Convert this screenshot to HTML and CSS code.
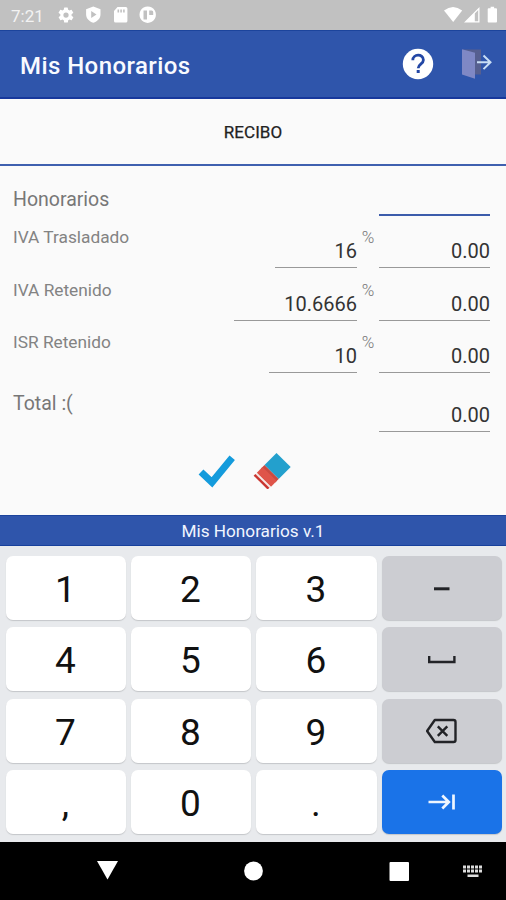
FILE: index.html
```html
<!DOCTYPE html>
<html lang="es">
<head>
<meta charset="utf-8">
<title>Mis Honorarios</title>
<link rel="stylesheet" href="styles.css">
</head>
<body>
<div class="status">
  <span class="clock">7:21</span>
  <svg class="status-left" width="104" height="20" viewBox="0 0 104 20" fill="#fff">
    <g transform="translate(1 1) scale(.75)"><path d="M19.4 13a7.500 7.500 0 0 0 0-2l2.100-1.600a.5.5 0 0 0 .1-.7l-2-3.400a.5.5 0 0 0-.6-.2l-2.500 1a7 7 0 0 0-1.700-1l-.4-2.600a.5.500 0 0 0-.5-.5h-4a.5.500 0 0 0-.5.5L9 5.100a7 7 0 0 0-1.700 1l-2.500-1a.5.5 0 0 0-.6.2l-2 3.400a.5.5 0 0 0 .1.700L4.500 11a8 8 0 0 0 0 2l-2.100 1.600a.5.5 0 0 0-.1.700l2 3.400c.1.200.4.300.6.200l2.500-1a7 7 0 0 0 1.700 1l.4 2.600c0 .3.200.5.5.5h4c.3 0 .5-.2.5-.5l.4-2.600a7 7 0 0 0 1.700-1l2.500 1c.2.100.5 0 .6-.2l2-3.400a.5.5 0 0 0-.1-.7zM12 15.500a3.500 3.500 0 1 1 0-7 3.500 3.500 0 0 1 0 7z"/></g>
    <path fill-rule="evenodd" d="M37.300 1.500l7.200 2.700v5c0 4.200-3 7.200-7.200 8.600-4.200-1.400-7.200-4.400-7.200-8.600v-5zM35.200 6v7l5.300-3.500z"/>
    <path fill-rule="evenodd" d="M61.500 2h8.300q1.600 0 1.600 1.600v12.300q0 1.600-1.600 1.600h-10.200q-1.600 0-1.600-1.600V6.100zM61.500 4.500v3h1.600v-3zM64.300 4.500v3h1.600v-3zM67.100 4.500v3h1.600v-3z"/>
    <path fill-rule="evenodd" d="M91.700 1.500a8.200 8.200 0 1 0 .01 0zM87.500 5.500h3.500v9h-3.500zM93.200 5.500h2.500q1.500 0 1.500 1.500v3h-4z"/>
  </svg>
  <svg class="status-right" width="56" height="18" viewBox="0 0 56 18" fill="#fff">
    <path d="M0 4.500Q9-2.600 18.200 4.500L9.200 16z"/>
    <path fill-rule="evenodd" d="M35.500 1v15.500H20zM34.200 4.100l-3.400 3.400v7.700h3.400z"/>
    <path d="M44.600 2.300h2V.8h3.500v1.500h2q.9 0 .9.900v12.400q0 .9-.9.900h-7.500q-.9 0-.9-.9V3.200q0-.9.900-.9z"/>
  </svg>
</div>
<header class="appbar">
  <h1 class="title">Mis Honorarios</h1>
  <svg width="32" height="32" viewBox="0 0 32 32"><circle cx="16" cy="16" r="15.200" fill="#fff"/><path d="M10.800 12.200c0-6.600 10.600-6.600 10.600-.2 0 4.200-5.200 4.200-5.200 8.200" fill="none" stroke="#2347a5" stroke-width="2.800"/><rect x="14.700" y="22" width="3" height="3" fill="#2347a5"/></svg>
  <svg class="exit" width="32" height="32" viewBox="0 0 32 32"><path d="M2 1.500h18v25H14z" fill="#565f8f"/><path d="M1 1.200l13 3.500v26L1 26.500z" fill="#7f88c5"/><path d="M16 14.300h13M22.500 7.500l7 6.800-7 6.800" fill="none" stroke="#c9def5" stroke-width="2"/></svg>
</header>
<nav class="tab">RECIBO</nav>
<main class="form">
  <div class="row first"><label class="label big">Honorarios</label><span class="field amount active"></span></div>
  <div class="row"><label class="label">IVA Trasladado</label><span class="field rate-iva">16</span><span class="pct">%</span><span class="field amount">0.00</span></div>
  <div class="row"><label class="label">IVA Retenido</label><span class="field rate-ret">10.6666</span><span class="pct">%</span><span class="field amount">0.00</span></div>
  <div class="row"><label class="label">ISR Retenido</label><span class="field rate-isr">10</span><span class="pct">%</span><span class="field amount">0.00</span></div>
  <div class="row total"><label class="label big">Total :(</label><span class="field amount">0.00</span></div>
  <div class="actions">
    <svg width="38" height="40" viewBox="0 0 38 40"><path d="M3 23L14 33.300 34.200 8.800" fill="none" stroke="#149bdc" stroke-width="7"/></svg>
    <svg width="38" height="40" viewBox="0 0 38 40"><g transform="translate(0 2.500)"><path d="M23.500 1.500L37.700 15.500 25.700 27.500 11.500 13.500z" fill="#23a0cd"/><path d="M11.500 13.500L25.700 27.500 22.200 31 8 17z" fill="#c94b42"/><path d="M9.500 15.500L23.700 29.500 18 35.200 3.800 21.200z" fill="#df5449"/><path d="M3 22.400L17 36.200" stroke="#f4e5e2" stroke-width="1.800"/><path d="M1.500 23.300L15.500 37.200" stroke="#c9352f" stroke-width="2.400"/></g></svg>
  </div>
</main>
<footer class="version">Mis Honorarios v.1</footer>
<section class="keyboard">
  <span class="key">1</span><span class="key">2</span><span class="key">3</span>
  <span class="key gray"><svg width="32" height="32" viewBox="0 0 32 32"><path d="M8 16.800h15.500" stroke="#222327" stroke-width="3"/></svg></span>
  <span class="key">4</span><span class="key">5</span><span class="key">6</span>
  <span class="key gray"><svg width="32" height="32" viewBox="0 0 32 32"><path d="M3.200 13v6h25.200v-6" fill="none" stroke="#222327" stroke-width="2.400"/></svg></span>
  <span class="key">7</span><span class="key">8</span><span class="key">9</span>
  <span class="key gray"><svg width="32" height="32" viewBox="0 0 32 32"><path d="M8.800 5H27.500q2 0 2 2v18q0 2-2 2H8.800L1.100 16zM11.800 11.300l9.500 9.500M21.300 11.300l-9.500 9.500" fill="none" stroke="#222327" stroke-width="2.400" stroke-linejoin="round"/></svg></span>
  <span class="key">,</span><span class="key">0</span><span class="key">.</span>
  <span class="key blue"><svg width="32" height="32" viewBox="0 0 32 32"><path d="M2.500 16h20M16.300 9.500l6.500 6.500-6.500 6.500M27.500 8.500v15" fill="none" stroke="#eef6ff" stroke-width="2.700"/></svg></span>
</section>
<div class="navbar">
  <svg width="506" height="58" viewBox="0 0 506 58" fill="#fff"><path d="M97 19h21L107.500 37.500z"/><circle cx="253.500" cy="29" r="9.400"/><rect x="389.500" y="20" width="19.500" height="19" rx="1"/><g fill="#ddd"><path d="M463 23.500h3v3h-3zM467 23.500h3v3h-3zM471 23.500h3v3h-3zM475 23.500h3v3h-3zM479 23.500h3v3h-3zM463 27.500h3v3h-3zM467 27.500h3v3h-3zM471 27.500h3v3h-3zM475 27.500h3v3h-3zM479 27.500h3v3h-3zM467.500 32.500h11v2.500h-11z"/></g></svg>
</div>
</body>
</html>
```

FILE: styles.css
```css
* { box-sizing: border-box; }
body { margin: 0; width: 506px; height: 900px; overflow: hidden; background: #fafafa; font-family: Roboto, sans-serif; }
svg { display: block; flex: none; }
.status { height: 30px; background: #c1c1c1; display: flex; align-items: center; padding: 0 8px 0 11px; color: #fff; }
.clock { font-size: 17px; width: 45px; line-height: 30px; padding-top: 1px; color: #f3f3f3; }
.status-right { margin-left: auto; margin-right: -1.500px; }
.appbar { height: 69px; background: #2f55ab; border-top: 1px solid #1c449c; border-bottom: 2px solid #17389c; display: flex; align-items: center; padding: 0 13px 0 20px; }
.title { margin: 0 auto 0 0; padding-top: 3px; font-size: 24px; letter-spacing: .43px; font-weight: 500; line-height: 30px; color: #f8faff; }
.exit { margin-left: 27px; }
.tab { height: 67px; border-bottom: 2px solid #3f60af; display: flex; align-items: center; justify-content: center; font-size: 17px; letter-spacing: .1px; font-weight: 400; -webkit-text-stroke: .25px #222; color: #222; }
.form { height: 349px; padding: 0 16px 0 13px; color: #333; }
.row { display: flex; align-items: flex-start; height: 52.500px; }
.row.first { height: 59px; }
.row.first .label { padding-top: 22px; }
.label { flex: 1; font-size: 17.300px; line-height: 24px; color: #838383; }
.label.big { font-size: 19.500px; color: #777; }
.field { height: 43px; border-bottom: 1.500px solid #999; text-align: right; font-size: 20px; line-height: 24px; padding-top: 14px; }
.amount { width: 111px; }
.field.active { height: 50px; border-bottom: 2px solid #3c5cab; }
.rate-iva { width: 82px; }
.rate-ret { width: 123px; }
.rate-isr { width: 88px; }
.pct { width: 22px; text-align: center; font-size: 17px; font-weight: 300; line-height: 24px; color: #777; }
.row.total { height: 64px; padding-top: 6px; }
.total .label { padding-top: 3px; }
.actions { display: flex; justify-content: center; gap: 17px; padding-top: 2px; margin-left: -14px; }
.version { height: 31px; background: #2f55ab; border-top: 1px solid #1c449c; border-bottom: 1px solid #17409c; text-align: center; font-size: 17.200px; line-height: 31px; color: #f1f5ff; }
.keyboard { height: 296px; background: #e8eaed; padding: 10px 4px 8px 5.500px; display: grid; grid-template-columns: 120px 120px 121px 120px; column-gap: 5px; row-gap: 7.300px; grid-template-rows: repeat(4, 64px); }
.key { display: flex; align-items: center; justify-content: center; border-radius: 7px; background: #fff; box-shadow: 0 1px 1px #c4c6c9; font-size: 37px; line-height: 64px; padding-top: 4px; color: #111; }
.gray { background: #cccdd2; padding-top: 0; }
.blue { background: #1a73e8; padding-top: 0; }
.navbar { height: 58px; background: #000; }
```
